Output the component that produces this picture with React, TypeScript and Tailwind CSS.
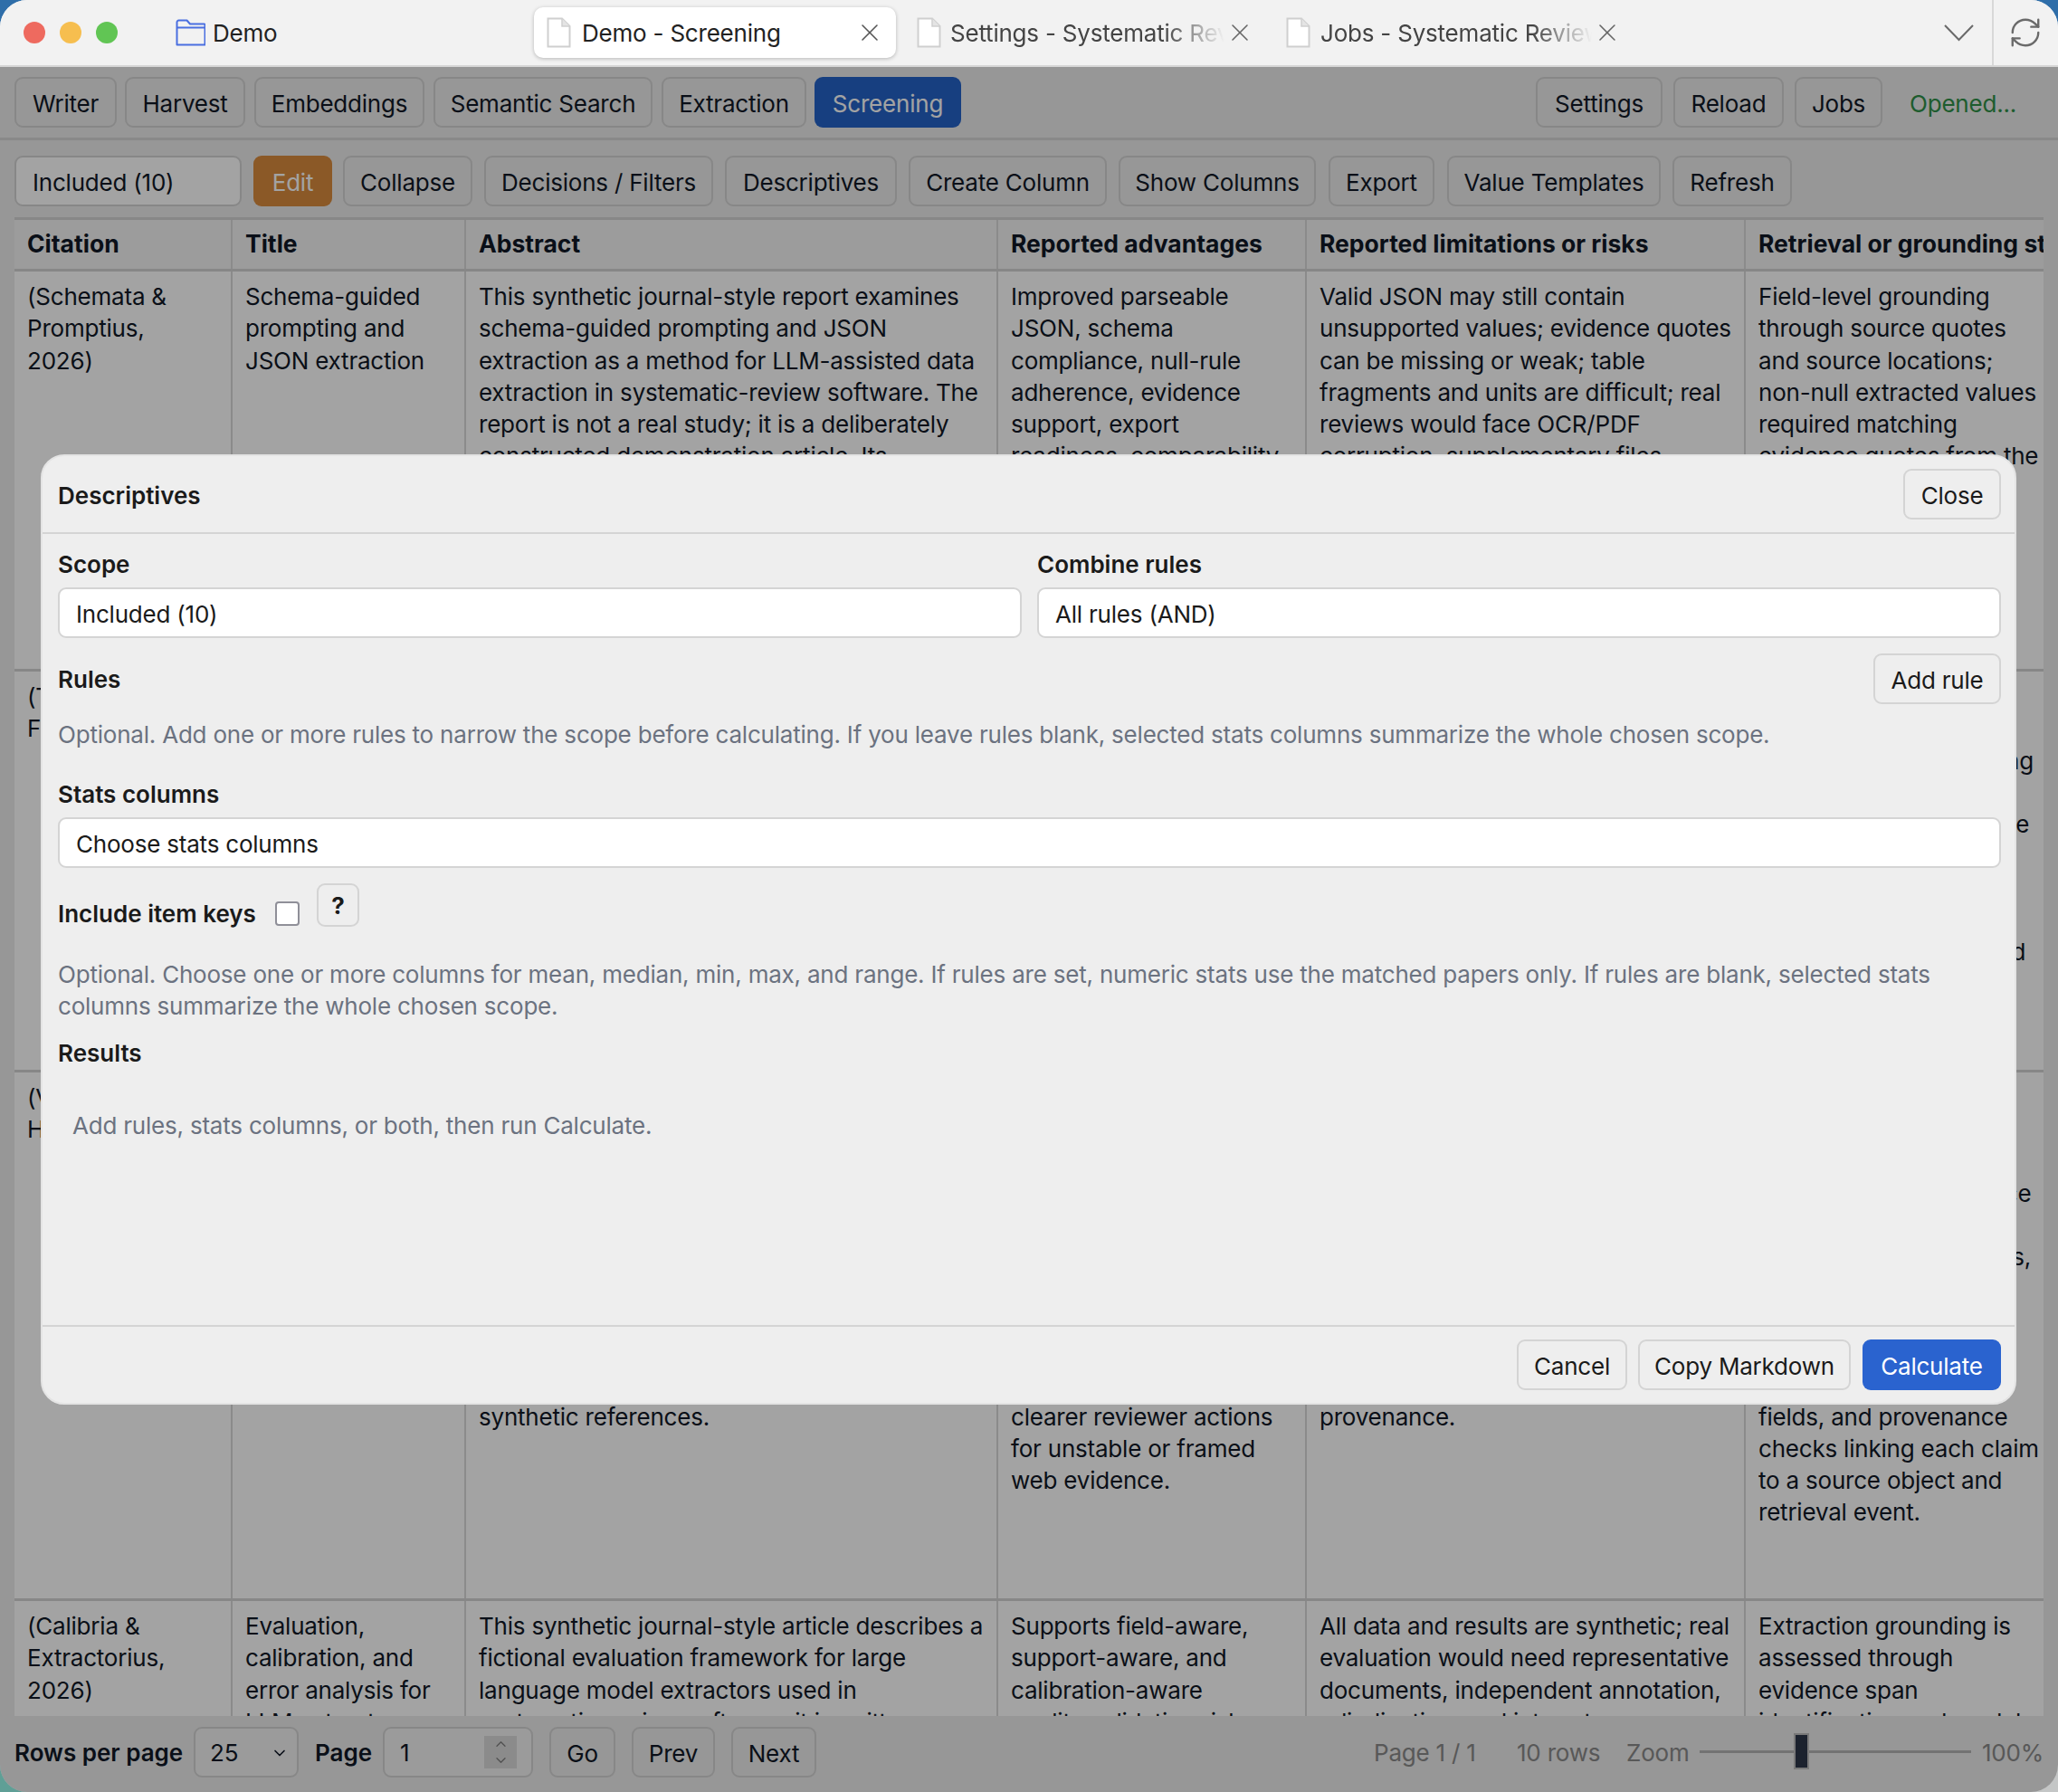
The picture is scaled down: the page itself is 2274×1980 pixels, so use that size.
import React from "react";
import { RefreshCw, ChevronDown, ChevronUp, X } from "lucide-react";

const BTN = "flex items-center justify-center h-[56px] shrink-0 rounded-[9px] border-2 border-[#d4d4d4] bg-[#ececec] text-[#111827] pt-[3px]";
const MBTN = "flex items-center justify-center h-[56px] rounded-[9px] border-2 border-[#d4d4d4] pt-[3px]";
const INPUT = "flex items-center h-[56px] pl-[18px] pt-[2px] rounded-[9px] border-2 border-[#d4d4d4] bg-white";
const LABEL = "font-semibold tracking-normal leading-[35px]";

function Btn({ w, ml, children }: { w: number; ml?: number; children: React.ReactNode }) {
  return (
    <div className={BTN} style={{ width: w, marginLeft: ml ?? 0 }}>
      {children}
    </div>
  );
}

function FileIcon() {
  return (
    <svg width="27" height="34" viewBox="0 0 27 34" className="shrink-0">
      <path d="M1.5 1.5H17L25.5 10V32.5H1.5Z" fill="#ffffff" stroke="#cfcfcf" strokeWidth="2" />
      <path d="M17 1.5V10H25.5" fill="#e4e4e4" stroke="#cfcfcf" strokeWidth="1.5" />
    </svg>
  );
}

function Cell({ lines, border = true }: { lines: string[]; border?: boolean }) {
  return (
    <div className={`h-full overflow-hidden pl-[14px] pt-[10px] whitespace-nowrap leading-[35.25px] ${border ? "border-r-2 border-[#d9d9d9]" : ""}`}>
      {lines.map((l, i) => (
        <div key={i} className="min-h-[35.25px]">{l}</div>
      ))}
    </div>
  );
}

const GRID = "grid grid-cols-[241px_258px_588px_341px_485px_500px] border-b-[3px] border-[#d4d4d4] bg-white shrink-0";

const rows: { h: number; cols: string[][] }[] = [
  {
    h: 442,
    cols: [
      ["(Schemata &", "Promptius,", "2026)"],
      ["Schema-guided", "prompting and", "JSON extraction"],
      ["This synthetic journal-style report examines", "schema-guided prompting and JSON", "extraction as a method for LLM-assisted data", "extraction in systematic-review software. The", "report is not a real study; it is a deliberately", "constructed demonstration article. Its"],
      ["Improved parseable", "JSON, schema", "compliance, null-rule", "adherence, evidence", "support, export", "readiness, comparability"],
      ["Valid JSON may still contain", "unsupported values; evidence quotes", "can be missing or weak; table", "fragments and units are difficult; real", "reviews would face OCR/PDF", "corruption, supplementary files"],
      ["Field-level grounding", "through source quotes", "and source locations;", "non-null extracted values", "required matching", "evidence quotes from the"],
    ],
  },
  {
    h: 443,
    cols: [
      ["(Tabula &", "Figurea, 2026)"],
      ["Table and figure", "extraction from", "PDF reports"],
      ["This synthetic journal-style report examines"],
      ["Improved table capture"],
      ["OCR errors remain"],
      ["Hybrid retrieval over", "passages with section", "chunking, and re-ranking", "with cited spans per", "claim, a validated source", "table, and stable", "locators for every", "extracted value that", "reviewers can audit, and"],
    ],
  },
  {
    h: 584,
    cols: [
      ["(Veritas &", "Hyperlink, 2026)"],
      ["Web evidence", "screening with", "provenance"],
      ["", "", "", "", "", "", "", "", "", "", "synthetic references."],
      ["", "", "", "", "", "", "", "", "", "", "clearer reviewer actions", "for unstable or framed", "web evidence."],
      ["", "", "", "", "", "", "", "", "", "", "provenance."],
      ["Retrieval uses stored", "snapshots, search", "logs, and query data", "captured by each source", "with stable locators,", "archived web snapshots,", "domain allowlists,", "timestamps, and", "citation links for each", "claim, with required", "fields, and provenance", "checks linking each claim", "to a source object and", "retrieval event."],
    ],
  },
  {
    h: 140,
    cols: [
      ["(Calibria &", "Extractorius,", "2026)"],
      ["Evaluation,", "calibration, and", "error analysis for", "LLM extractors"],
      ["This synthetic journal-style article describes a", "fictional evaluation framework for large", "language model extractors used in", "systematic-review software; it is written"],
      ["Supports field-aware,", "support-aware, and", "calibration-aware", "quality validation risk"],
      ["All data and results are synthetic; real", "evaluation would need representative", "documents, independent annotation,", "adjudication, and interrater"],
      ["Extraction grounding is", "assessed through", "evidence span", "identification and model"],
    ],
  },
];

const headers = ["Citation", "Title", "Abstract", "Reported advantages", "Reported limitations or risks", "Retrieval or grounding strategy"];

export default function App() {
  return (
    <div className="w-[2274px] h-[1980px] overflow-hidden bg-[linear-gradient(180deg,#2f6ea9_50%,transparent_50%),linear-gradient(90deg,#5f9f96_50%,#c4c6c6_50%)] [font-family:Inter,sans-serif] text-[26px] tracking-[-0.21px] text-[#111827] antialiased">
      <div className="relative w-full h-full rounded-[30px] overflow-hidden bg-[#ececec] flex flex-col">
        {/* Title bar */}
        <div className="h-[74px] shrink-0 bg-[#f2f2f2] border-b-2 border-[#d6d6d6] flex items-center relative z-20 text-[#222222]">
          <div className="flex gap-[16px] ml-[26px]">
            <div className="w-[24px] h-[24px] rounded-full bg-[#ee6a5f]" />
            <div className="w-[24px] h-[24px] rounded-full bg-[#f6be4f]" />
            <div className="w-[24px] h-[24px] rounded-full bg-[#61c554]" />
          </div>
          <svg width="33" height="30" viewBox="0 0 33 30" className="ml-[64px] shrink-0">
            <path d="M1.5 28.5V3.5a2 2 0 0 1 2-2h9l3.5 4h15.5a1 1 0 0 1 1 1v22Z M1.5 9.5H32" fill="none" stroke="#4a6fe0" strokeWidth="2" strokeLinejoin="round" />
          </svg>
          <span className="ml-[8px] w-[355px] shrink-0 pt-[1px]">Demo</span>
          <div className="w-[400px] h-[56px] shrink-0 rounded-[10px] bg-white shadow-[0_1px_4px_rgba(0,0,0,0.25)] flex items-center pl-[14px] pr-[13px]">
            <FileIcon />
            <span className="ml-[12px] flex-1 pt-[1px]">Demo - Screening</span>
            <X size={32} strokeWidth={1.2} className="text-[#555555]" />
          </div>
          <div className="ml-[23px] w-[373px] shrink-0 flex items-center text-[#444444]">
            <FileIcon />
            <span className="ml-[10px] w-[303px] overflow-hidden whitespace-nowrap pt-[1px] [mask-image:linear-gradient(90deg,#000_78%,transparent_100%)]">Settings - Systematic Review</span>
            <X size={32} strokeWidth={1.2} className="ml-[1px] text-[#666666]" />
          </div>
          <div className="ml-[35px] w-[371px] shrink-0 flex items-center text-[#444444]">
            <FileIcon />
            <span className="ml-[11px] w-[301px] overflow-hidden whitespace-nowrap pt-[1px] [mask-image:linear-gradient(90deg,#000_78%,transparent_100%)]">Jobs - Systematic Review</span>
            <X size={32} strokeWidth={1.2} className="ml-[1px] text-[#666666]" />
          </div>
          <svg width="33" height="19" viewBox="0 0 33 19" className="ml-[356px] shrink-0">
            <path d="M1 1L16.5 17L32 1" fill="none" stroke="#6a6a6a" strokeWidth="2" />
          </svg>
          <div className="ml-[20px] w-[2px] h-[72px] bg-[#d8d8d8]" />
          <RefreshCw size={38} strokeWidth={1.5} className="ml-[16px] text-[#6a6a6a]" />
        </div>

        {/* Top toolbar */}
        <div className="h-[81px] shrink-0 border-b-[3px] border-[#d6d6d6] flex items-center pl-[16px]">
          <Btn w={113}>Writer</Btn>
          <Btn w={133} ml={9}>Harvest</Btn>
          <Btn w={188} ml={10}>Embeddings</Btn>
          <Btn w={242} ml={10}>Semantic Search</Btn>
          <Btn w={160} ml={10}>Extraction</Btn>
          <div className="flex items-center justify-center h-[56px] w-[162px] ml-[9px] pt-[3px] shrink-0 rounded-[9px] bg-[#2563c9] text-white">Screening</div>
          <Btn w={140} ml={635}>Settings</Btn>
          <Btn w={122} ml={12}>Reload</Btn>
          <Btn w={97} ml={12}>Jobs</Btn>
          <span className="ml-[30px] text-[#2f9148] pt-[3px]">Opened...</span>
        </div>

        {/* Second toolbar */}
        <div className="h-[85px] shrink-0 flex items-start pt-[17px] pl-[16px]">
          <div className="flex items-center h-[56px] w-[251px] shrink-0 pl-[18px] pt-[3px] rounded-[9px] border-2 border-[#d4d4d4] bg-white">Included (10)</div>
          <div className="flex items-center justify-center h-[56px] w-[87px] ml-[13px] pt-[3px] shrink-0 rounded-[9px] bg-[#d98b3d] text-white">Edit</div>
          <Btn w={143} ml={12}>Collapse</Btn>
          <Btn w={253} ml={13}>Decisions / Filters</Btn>
          <Btn w={190} ml={13}>Descriptives</Btn>
          <Btn w={219} ml={13}>Create Column</Btn>
          <Btn w={218} ml={13}>Show Columns</Btn>
          <Btn w={117} ml={14}>Export</Btn>
          <Btn w={236} ml={14}>Value Templates</Btn>
          <Btn w={132} ml={13}>Refresh</Btn>
        </div>

        {/* Table */}
        <div className="flex-1 min-h-0 ml-[16px] mr-[16px] overflow-hidden flex flex-col border-t-[3px] border-[#d4d4d4]">
          <div className="grid grid-cols-[241px_258px_588px_341px_485px_500px] h-[57px] shrink-0 items-stretch border-b-[3px] border-[#d4d4d4] bg-[#f5f5f5] font-bold tracking-normal text-[26.5px]">
            {headers.map((h, i) => (
              <div key={h} className={`flex items-center pl-[14px] whitespace-nowrap overflow-hidden ${i < 5 ? "border-r-2 border-[#d9d9d9]" : ""}`}>
                {h}
              </div>
            ))}
          </div>
          {rows.map((r, ri) => (
            <div key={ri} className={GRID} style={{ height: r.h }}>
              {r.cols.map((c, i) => (
                <Cell key={i} lines={c} border={i < 5} />
              ))}
            </div>
          ))}
        </div>

        {/* Footer */}
        <div className="h-[84px] shrink-0 flex items-center pl-[16px] pb-[5px]">
          <span className="font-semibold tracking-normal w-[198px] shrink-0 pt-[2px]">Rows per page</span>
          <div className="flex items-center justify-between h-[56px] w-[116px] shrink-0 pl-[16px] pr-[9px] pt-[2px] rounded-[9px] border-2 border-[#d4d4d4] bg-[#f3f3f3]">
            25
            <ChevronDown size={20} strokeWidth={2} />
          </div>
          <span className="ml-[18px] w-[75px] shrink-0 font-semibold tracking-normal pt-[2px]">Page</span>
          <div className="flex items-center justify-between h-[56px] w-[166px] shrink-0 pl-[17px] pr-[16px] rounded-[9px] border-2 border-[#d4d4d4] bg-[#f3f3f3]">
            <span className="pt-[2px]">1</span>
            <div className="flex flex-col items-center justify-center w-[36px] h-[36px] bg-[#dadada] text-[#808080]">
              <ChevronUp size={19} strokeWidth={1.8} />
              <ChevronDown size={19} strokeWidth={1.8} />
            </div>
          </div>
          <Btn w={73} ml={18}>Go</Btn>
          <Btn w={92} ml={18}>Prev</Btn>
          <Btn w={94} ml={18}>Next</Btn>
          <span className="ml-[616px] w-[158px] shrink-0 text-[#8a8a8a] whitespace-nowrap pt-[2px]">Page 1 / 1</span>
          <span className="w-[121px] shrink-0 text-[#8a8a8a] whitespace-nowrap pt-[2px]">10 rows</span>
          <span className="w-[81px] shrink-0 text-[#8a8a8a] whitespace-nowrap pt-[2px]">Zoom</span>
          <div className="relative w-[300px] shrink-0 h-[3px] bg-[#b5b5b5]">
            <div className="absolute left-[106px] top-[-17px] w-[13px] h-[36px] bg-[#2d3648] outline-2 outline-[#bdbdbd]" />
          </div>
          <span className="ml-[12px] text-[#8a8a8a] whitespace-nowrap pt-[2px]">100%</span>
        </div>

        {/* Dim overlay */}
        <div className="absolute left-0 right-0 top-[74px] bottom-0 bg-black/[0.36]" />

        {/* Modal */}
        <div className="absolute left-[45px] top-[502px] w-[2183px] h-[1050px] rounded-[26px] bg-[#eeeeee] border-2 border-[#e4e4e4] flex flex-col text-[#1a1a1a]">
          <div className="h-[86px] shrink-0 border-b-2 border-[#d4d4d4] flex items-center justify-between pl-[17px] pr-[15px]">
            <span className="font-semibold tracking-normal pt-[2px]">Descriptives</span>
            <div className={`${MBTN} w-[108px]`}>Close</div>
          </div>
          <div className="flex-1 min-h-0 pl-[17px] pr-[15px] pt-[16px]">
            <div className="grid grid-cols-2 gap-x-[17px]">
              <div>
                <div className={LABEL}>Scope</div>
                <div className={`${INPUT} mt-[8px]`}>Included (10)</div>
              </div>
              <div>
                <div className={LABEL}>Combine rules</div>
                <div className={`${INPUT} mt-[8px]`}>All rules (AND)</div>
              </div>
            </div>
            <div className="mt-[17px] flex items-center justify-between">
              <span className="font-semibold tracking-normal">Rules</span>
              <div className={`${MBTN} w-[141px]`}>Add rule</div>
            </div>
            <div className="mt-[16px] leading-[35px] text-[#6b7280]">Optional. Add one or more rules to narrow the scope before calculating. If you leave rules blank, selected stats columns summarize the whole chosen scope.</div>
            <div className={`${LABEL} mt-[31px]`}>Stats columns</div>
            <div className={`${INPUT} mt-[8px]`}>Choose stats columns</div>
            <div className="mt-[17px] flex items-start h-[48px]">
              <span className="font-semibold tracking-normal leading-[35px] mt-[16px] w-[240px] shrink-0 whitespace-nowrap">Include item keys</span>
              <div className="mt-[20px] w-[27px] h-[27px] shrink-0 rounded-[4px] border-2 border-[#8f8f98] bg-white" />
              <div className="ml-[19px] w-[47px] h-[48px] shrink-0 rounded-[9px] border-2 border-[#d4d4d4] flex items-start justify-center pt-[3px] font-bold">?</div>
            </div>
            <div className="mt-[35px] leading-[35px] text-[#6b7280]">Optional. Choose one or more columns for mean, median, min, max, and range. If rules are set, numeric stats use the matched papers only. If rules are blank, selected stats columns summarize the whole chosen scope.</div>
            <div className={`${LABEL} mt-[17px]`}>Results</div>
            <div className="mt-[45px] ml-[16px] leading-[35px] text-[#6b7280]">Add rules, stats columns, or both, then run Calculate.</div>
          </div>
          <div className="h-[86px] shrink-0 border-t-2 border-[#d4d4d4] flex items-center justify-end pr-[15px] pb-[1px]">
            <div className={`${MBTN} w-[122px]`}>Cancel</div>
            <div className={`${MBTN} ml-[12px] w-[235px]`}>Copy Markdown</div>
            <div className="ml-[13px] flex items-center justify-center w-[153px] h-[56px] pt-[3px] rounded-[9px] bg-[#2a63cf] text-white">Calculate</div>
          </div>
        </div>
      </div>
    </div>
  );
}
